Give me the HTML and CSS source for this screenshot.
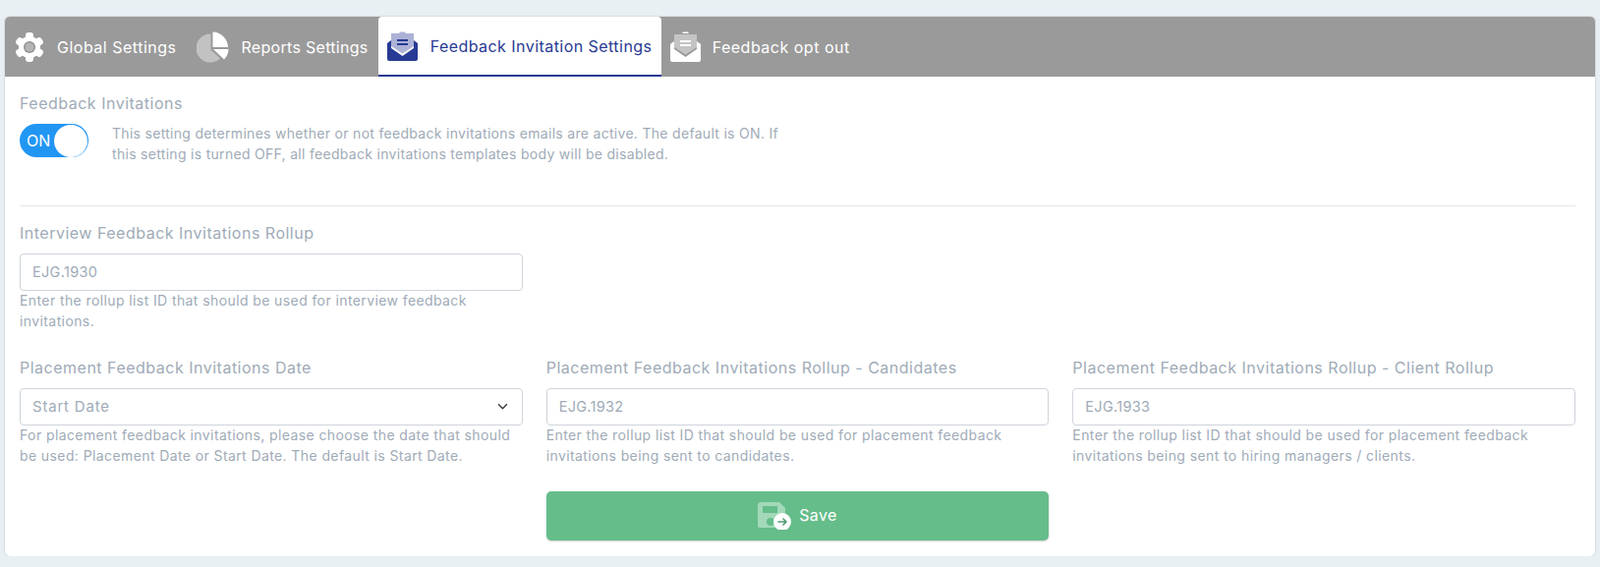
FILE: index.html
```html
<!DOCTYPE html>
<html lang="en">
<head>
    <meta charset="UTF-8">
    <meta name="viewport" content="width=device-width, initial-scale=1.0">
    <title>Feedback Invitation Settings</title>
    <link rel="stylesheet" href="styles.css">
</head>
<body>

    <div class="card">

        <!-- Tabs -->
        <div class="tabs">
            <a class="tab tab-global">
                <svg class="tab-icon" viewBox="0 0 30 32" width="30" height="32">
                    <g fill="#fff">
                        <circle cx="15" cy="16" r="11"/>
                        <rect x="11" y="1" width="8" height="30" rx="3"/>
                        <rect x="11" y="1" width="8" height="30" rx="3" transform="rotate(60 15 16)"/>
                        <rect x="11" y="1" width="8" height="30" rx="3" transform="rotate(120 15 16)"/>
                    </g>
                    <circle cx="15" cy="16" r="6" fill="#8f8f8f"/>
                    <circle cx="15" cy="16" r="4.500" fill="#b5b5b5"/>
                </svg>
                <span>Global Settings</span>
            </a>
            <a class="tab tab-reports">
                <svg class="tab-icon" viewBox="0 0 33 32" width="33" height="32">
                    <path fill="#c2c2c2" d="M14.500 2.500A14.500 14.500 0 1 0 24 27.500l-9.500-9z"/>
                    <path fill="#fff" d="M16.500 0.500a16 16 0 0 1 15.500 15.500H16.500z"/>
                    <path fill="#fff" d="M17 18h15.500a16 16 0 0 1-4.500 10.500z"/>
                </svg>
                <span>Reports Settings</span>
            </a>
            <a class="tab active">
                <svg class="tab-icon" viewBox="0 0 31 32" width="31" height="32">
                    <path fill="#273a94" d="M0 13l4-3v8l11.500 8L27 18v-8l4 3v16a2 2 0 0 1-2 2H2a2 2 0 0 1-2-2z"/>
                    <path fill="#acb2d6" d="M4 3h8l1-1.500h5L19 3h8v13l-11.500 7.500L4 16z"/>
                    <path fill="#273a94" d="M10 9h11v2H10zM10 13h11v2H10z"/>
                </svg>
                <span>Feedback Invitation Settings</span>
            </a>
            <a class="tab">
                <svg class="tab-icon" viewBox="0 0 31 32" width="31" height="32">
                    <path fill="#fff" d="M0 13l4-3v8l11.500 8L27 18v-8l4 3v16a2 2 0 0 1-2 2H2a2 2 0 0 1-2-2z"/>
                    <path fill="#fff" d="M12 2l1-1.500h5L19 2z"/>
                    <path fill="#c4c4c4" d="M4 3h23v13l-11.500 7.500L4 16z"/>
                    <path fill="#fff" d="M10 9h11v2H10zM10 13h11v2H10z"/>
                </svg>
                <span>Feedback opt out</span>
            </a>
        </div>

        <div class="content">

            <!-- Toggle section -->
            <label class="field-label">Feedback Invitations</label>
            <div class="toggle-row">
                <div class="toggle">
                    <span class="toggle-text">ON</span>
                    <span class="toggle-knob"></span>
                </div>
                <p class="toggle-desc">This setting determines whether or not feedback invitations emails are active. The default is ON. If this setting is turned OFF, all feedback invitations templates body will be disabled.</p>
            </div>

            <hr class="divider">

            <div class="grid">
                <div class="field">
                    <label class="field-label">Interview Feedback Invitations Rollup</label>
                    <input class="input" type="text" value="EJG.1930">
                    <p class="help">Enter the rollup list ID that should be used for interview feedback invitations.</p>
                </div>
            </div>

            <div class="grid second">
                <div class="field">
                    <label class="field-label">Placement Feedback Invitations Date</label>
                    <div class="input select">
                        <span>Start Date</span>
                        <svg viewBox="0 0 12 8" width="11" height="7"><path d="M1 1.500l5 5 5-5" fill="none" stroke="#343a40" stroke-width="1.600"/></svg>
                    </div>
                    <p class="help">For placement feedback invitations, please choose the date that should be used: Placement Date or Start Date. The default is Start Date.</p>
                </div>
                <div class="field">
                    <label class="field-label">Placement Feedback Invitations Rollup - Candidates</label>
                    <input class="input" type="text" value="EJG.1932">
                    <p class="help">Enter the rollup list ID that should be used for placement feedback invitations being sent to candidates.</p>
                </div>
                <div class="field">
                    <label class="field-label">Placement Feedback Invitations Rollup - Client Rollup</label>
                    <input class="input" type="text" value="EJG.1933">
                    <p class="help">Enter the rollup list ID that should be used for placement feedback invitations being sent to hiring managers / clients.</p>
                </div>
            </div>

            <div class="grid actions">
                <button class="save-btn">
                    <svg viewBox="0 0 34 28" width="34" height="28">
                        <path fill="#a3d9b8" d="M3 0h19l6 6v18a2 2 0 0 1-2 2H2a2 2 0 0 1-2-2V3a3 3 0 0 1 3-3z"/>
                        <rect x="5" y="4" width="15" height="7" fill="#65bd8a"/>
                        <circle cx="13" cy="20" r="4" fill="#65bd8a"/>
                        <circle cx="25" cy="20" r="9" fill="#fff"/>
                        <path d="M20.500 20h8M25.500 16.500l3.500 3.500-3.500 3.500" fill="none" stroke="#4f9a70" stroke-width="1.500"/>
                    </svg>
                    <span class="save-text">Save</span>
                </button>
            </div>

        </div>
    </div>

</body>
</html>
```

FILE: styles.css
```css
body {
    font-family: Inter, "Liberation Sans", sans-serif;
    margin: 0;
    padding: 17px 5px 0;
    background-color: #e9f0f4;
    color: #a0abb7;
}

.card {
    height: 549px;
    box-sizing: border-box;
    background-color: #fff;
    border-radius: 5px;
    box-shadow: 0 0 2px rgba(0, 0, 0, 0.25);
    overflow: hidden;
}

.tabs {
    display: flex;
    height: 61px;
    background-color: #9a9a9a;
    padding-left: 10px;
}

.tab {
    display: flex;
    align-items: center;
    gap: 12px;
    box-sizing: border-box;
    height: 61px;
    color: #fff;
    font-size: 16px;
    letter-spacing: 0.5px;
    white-space: nowrap;
}

.tab-global {
    gap: 13px;
    margin-right: 21px;
}

.tab-reports {
    margin-right: 10px;
    letter-spacing: 0.3px;
}

.tab.active {
    gap: 13px;
    width: 288px;
    padding-left: 9px;
    margin-right: 9px;
    background-color: #fff;
    color: #273a94;
    border-bottom: 2px solid #273a94;
    border-radius: 4px 4px 0 0;
    letter-spacing: 0.45px;
}

.tab-icon {
    flex-shrink: 0;
}

.content {
    padding: 16px 20px 0 15px;
}

.field-label {
    display: block;
    font-size: 16px;
    letter-spacing: 0.5px;
    line-height: 23px;
}

.toggle-row {
    display: flex;
    align-items: flex-start;
    gap: 24px;
    margin-top: 9px;
}

.toggle {
    position: relative;
    flex-shrink: 0;
    width: 70px;
    height: 34px;
    border-radius: 17px;
    background-color: #2196f3;
    color: #fff;
    font-size: 16px;
    line-height: 34px;
}

.toggle-text {
    padding-left: 7px;
}

.toggle-knob {
    position: absolute;
    top: 0.5px;
    right: 1px;
    width: 34px;
    height: 33px;
    border-radius: 50%;
    background-color: #fff;
}

.toggle-desc {
    width: 680px;
    margin: -1px 0 0;
    font-size: 14px;
    letter-spacing: 0.3px;
    line-height: 21px;
}

.divider {
    border: none;
    border-top: 1px solid #e3e6ea;
    margin: 42px 0 0;
}

.grid {
    display: grid;
    grid-template-columns: repeat(3, 1fr);
    column-gap: 24px;
    margin-top: 16px;
}

.grid.second {
    margin-top: 26px;
}

.grid.actions {
    margin-top: 26px;
}

.input {
    display: block;
    box-sizing: border-box;
    width: 100%;
    height: 38px;
    margin: 9px 0 0;
    padding: 0 12px 2px;
    border: 1px solid #ced4da;
    border-radius: 4px;
    background-color: #fff;
    font-family: inherit;
    font-size: 14.500px;
    letter-spacing: 0.3px;
    color: #a0abb7;
}

.select {
    display: flex;
    align-items: center;
    justify-content: space-between;
    padding-right: 14px;
    font-size: 15px;
    letter-spacing: 0.8px;
}

.help {
    margin: -1px 0 0;
    font-size: 14px;
    letter-spacing: 0.4px;
    line-height: 21px;
}

.save-btn {
    grid-column: 2;
    display: flex;
    align-items: center;
    justify-content: center;
    gap: 8px;
    width: 100%;
    height: 50px;
    border: none;
    border-radius: 5px;
    background-color: #65bd8a;
    box-shadow: 0 1px 2px rgba(0, 0, 0, 0.2);
    color: #fff;
    font-family: inherit;
    font-size: 16px;
    letter-spacing: 0.4px;
}

.save-text {
    padding-bottom: 3px;
}
```
